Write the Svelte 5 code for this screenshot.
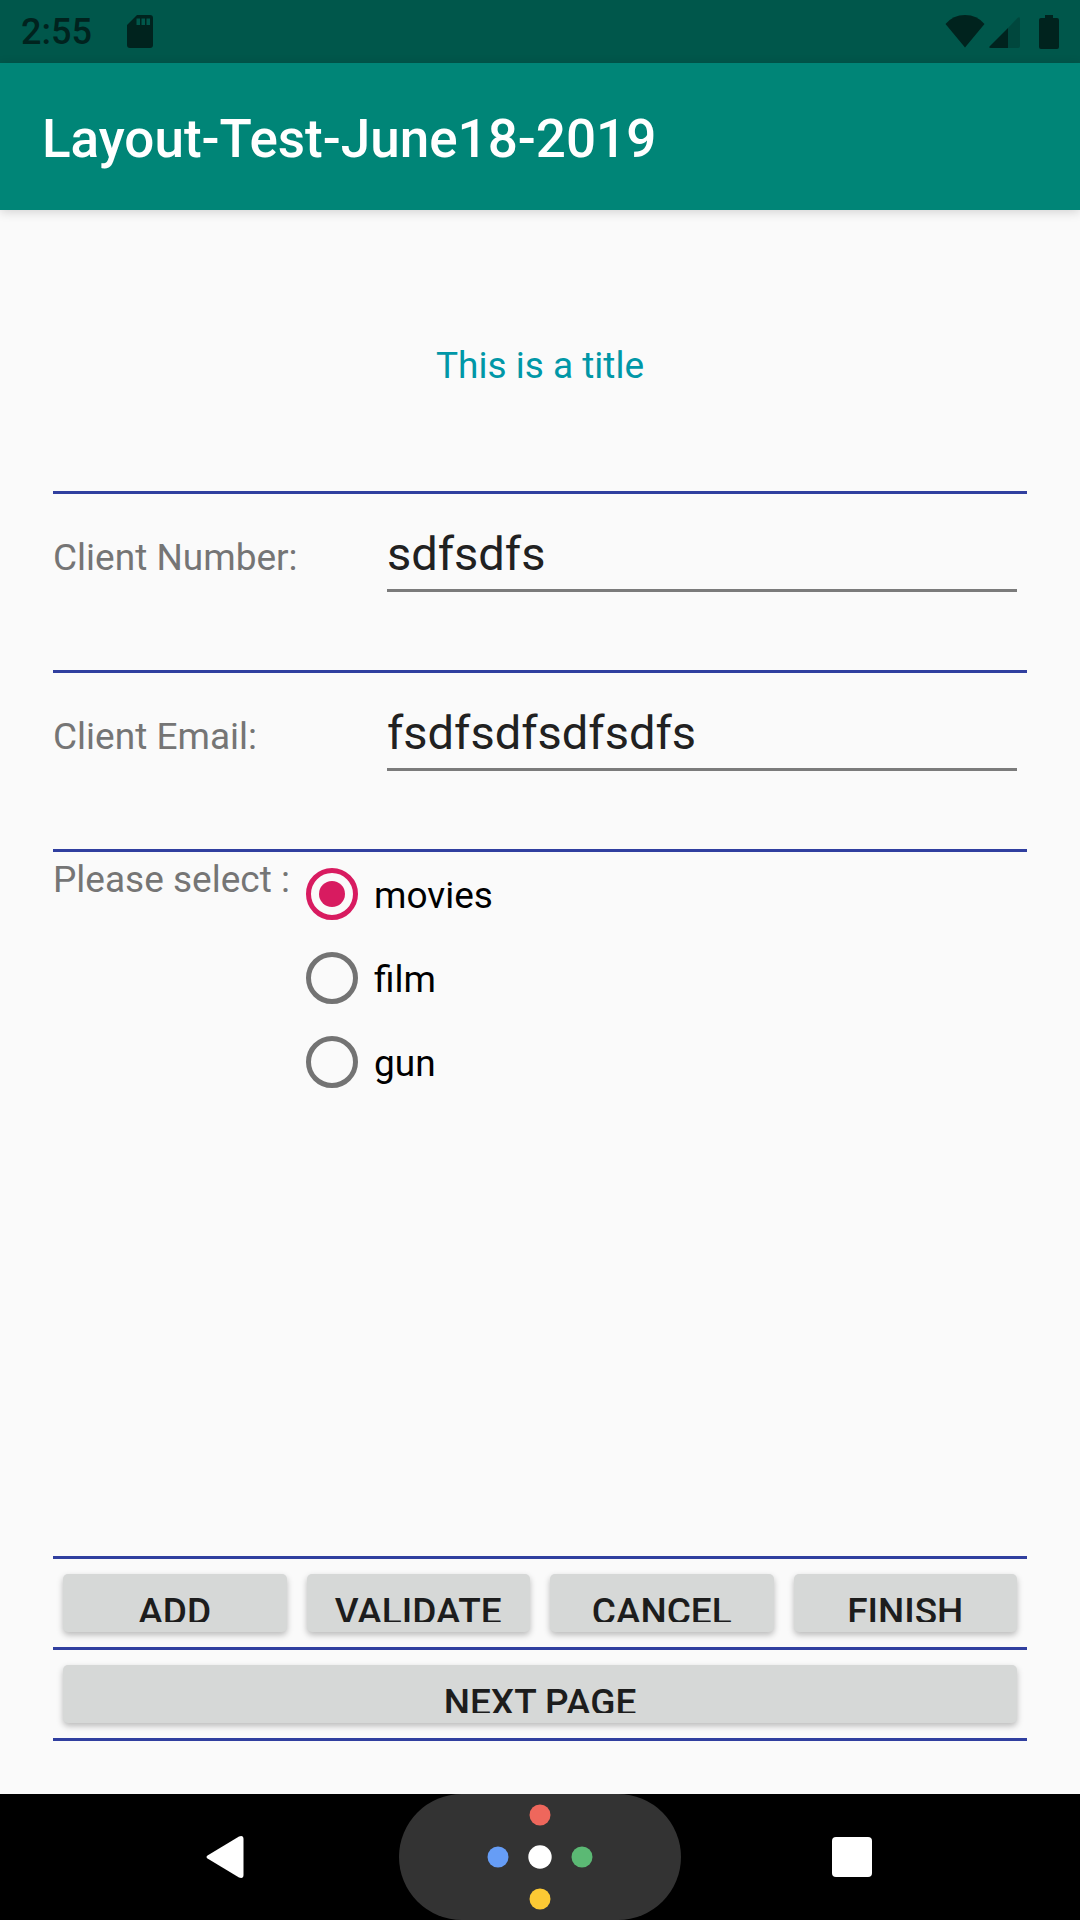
<script>
  let clientNumber = $state('sdfsdfs');
  let clientEmail = $state('fsdfsdfsdfsdfs');
  let choice = $state('movies');
  const options = ['movies', 'film', 'gun'];
  const actions = ['ADD', 'VALIDATE', 'CANCEL', 'FINISH'];
</script>

<div class="screen">
  <div class="status">
    <span class="time">2:55</span>
    <svg class="sd" width="26" height="34" viewBox="0 0 26 34" aria-hidden="true">
      <path fill-rule="evenodd" d="M10 0H23Q26 0 26 3V30Q26 33 23 33H3Q0 33 0 30V10ZM9.500 3.500V10H13V3.500ZM14.500 3.500V10H18V3.500ZM19.500 3.500V10H23V3.500Z" />
    </svg>
    <div class="signals">
      <svg width="40" height="34" viewBox="0 0 40 34" aria-hidden="true">
        <path d="M20 32.500L0.500 9Q8 0 20 0T39.500 9Z" />
      </svg>
      <svg class="cell" width="32" height="34" viewBox="0 0 32 34" aria-hidden="true">
        <path opacity="0.3" d="M19 13L28.500 3Q31 1 31 4V31Q31 33 29 33H19Z" />
        <path d="M19 13V33H2Q-1 33 1 31Z" />
      </svg>
      <svg width="20" height="34" viewBox="0 0 20 34" aria-hidden="true">
        <path d="M6 0H14V3H18Q20 3 20 5V32Q20 34 18 34H2Q0 34 0 32V5Q0 3 2 3H6Z" />
      </svg>
    </div>
  </div>

  <header><h1>Layout-Test-June18-2019</h1></header>

  <main>
    <h2>This is a title</h2>
    <hr />
    <div class="field">
      <label for="client-number">Client Number:</label>
      <input id="client-number" type="text" bind:value={clientNumber} />
    </div>
    <hr />
    <div class="field">
      <label for="client-email">Client Email:</label>
      <input id="client-email" type="email" bind:value={clientEmail} />
    </div>
    <hr />
    <div class="select" role="radiogroup" aria-labelledby="select-label">
      <span class="prompt" id="select-label">Please select :</span>
      <div>
        {#each options as option}
          <label class="option">
            <input type="radio" name="choice" value={option} bind:group={choice} />
            <span>{option}</span>
          </label>
        {/each}
      </div>
    </div>

    <div class="footer">
      <hr />
      <div class="buttons">
        {#each actions as action}
          <button class="raised" type="button"><span>{action}</span></button>
        {/each}
      </div>
      <hr />
      <div class="buttons">
        <button class="raised" type="button"><span>NEXT PAGE</span></button>
      </div>
      <hr />
    </div>
  </main>

  <nav>
    <button type="button" aria-label="Back">
      <svg width="44" height="44" viewBox="0 0 44 44" aria-hidden="true">
        <path fill="#fff" d="M1.500 20.500L33 1.500Q37.500 0 37.500 4V40Q37.500 44 33 42.500L1.500 23.500Q-0.500 22 1.500 20.500Z" />
      </svg>
    </button>
    <button class="home" type="button" aria-label="Home">
      <svg width="126" height="126" viewBox="0 0 126 126" aria-hidden="true">
        <circle cx="63" cy="21" r="10.500" fill="#ee675c" />
        <circle cx="21" cy="63" r="10.500" fill="#669df6" />
        <circle cx="63" cy="63" r="11.700" fill="#fff" />
        <circle cx="105" cy="63" r="10.500" fill="#5bb974" />
        <circle cx="63" cy="105" r="10.500" fill="#fcc934" />
      </svg>
    </button>
    <button type="button" aria-label="Recent apps">
      <svg width="40" height="40" viewBox="0 0 40 40" aria-hidden="true">
        <rect width="40" height="40" rx="4" fill="#fff" />
      </svg>
    </button>
  </nav>
</div>

<style>
  :global(body) {
    margin: 0;
  }
  .screen {
    display: flex;
    flex-direction: column;
    min-height: 100vh;
    background: #fafafa;
    font-family: Roboto, sans-serif;
    font-size: 37px;
    line-height: 44px;
    color: #757575;
  }
  svg {
    display: block;
  }
  .status {
    display: flex;
    align-items: center;
    height: 63px;
    box-sizing: border-box;
    padding: 1px 21px 0;
    background: #00574b;
    color: #00231e;
    fill: #00231e;
  }
  .time {
    font-size: 36px;
    font-weight: 500;
  }
  .sd {
    margin-left: 35px;
  }
  .signals {
    display: flex;
    margin-left: auto;
  }
  .cell {
    margin: 0 18px 0 4px;
  }
  header {
    display: flex;
    align-items: center;
    height: 147px;
    box-sizing: border-box;
    padding: 4px 42px 0;
    background: #008577;
    box-shadow: 0 2px 10px rgba(0, 0, 0, 0.16);
  }
  h1 {
    margin: 0;
    font-size: 53px;
    line-height: 64px;
    font-weight: 500;
    color: #fff;
  }
  main {
    flex: 1;
    display: flex;
    flex-direction: column;
    padding: 53px;
  }
  h2 {
    margin: 0;
    padding: 81px 0 103px;
    font-size: 37px;
    font-weight: 400;
    text-align: center;
    color: #0097a7;
  }
  hr {
    width: 100%;
    height: 3px;
    margin: 0;
    border: 0;
    background: #303f9f;
  }
  .field {
    display: grid;
    grid-template-columns: 334px 1fr;
    align-items: baseline;
    padding: 32px 10px 78px 0;
  }
  .field input {
    min-width: 0;
    padding: 0 0 7px;
    border: 0;
    border-bottom: 3px solid #7b7b7b;
    border-radius: 0;
    outline: 0;
    background: none;
    font-family: inherit;
    font-size: 47px;
    line-height: 56px;
    height: 56px;
    color: #212121;
  }
  .select {
    display: grid;
    grid-template-columns: 253px 1fr;
  }
  .prompt {
    padding-top: 6px;
  }
  .option {
    display: flex;
    align-items: center;
    gap: 16px;
    height: 84px;
    color: #000;
  }
  .option span {
    padding-top: 3px;
  }
  .option input {
    appearance: none;
    display: grid;
    place-items: center;
    width: 52px;
    height: 52px;
    box-sizing: border-box;
    margin: 0;
    border: 5px solid #737373;
    border-radius: 50%;
  }
  .option input:checked {
    border-color: #d81b60;
  }
  .option input:checked::before {
    content: '';
    width: 26px;
    height: 26px;
    border-radius: 50%;
    background: #d81b60;
  }
  .footer {
    margin-top: auto;
  }
  .buttons {
    display: flex;
    gap: 20px;
    padding: 15px 10px;
  }
  .raised {
    flex: 1 1 0;
    min-width: 0;
    height: 58px;
    padding: 16px 0 10px;
    border: 0;
    border-radius: 5px;
    background: #d6d8d7;
    box-shadow: 0 3px 6px rgba(0, 0, 0, 0.26);
    font: 500 37px/44px Roboto, sans-serif;
    color: #1d1d1d;
  }
  .raised span {
    display: block;
    height: 32px;
    overflow: hidden;
  }
  nav {
    display: flex;
    gap: 30px;
    padding: 0 87px;
    background: #000;
  }
  nav button {
    flex: 1 1 0;
    display: flex;
    align-items: center;
    justify-content: center;
    height: 126px;
    padding: 0;
    border: 0;
    background: none;
  }
  nav .home {
    border-radius: 63px;
    background: #333;
  }
</style>
